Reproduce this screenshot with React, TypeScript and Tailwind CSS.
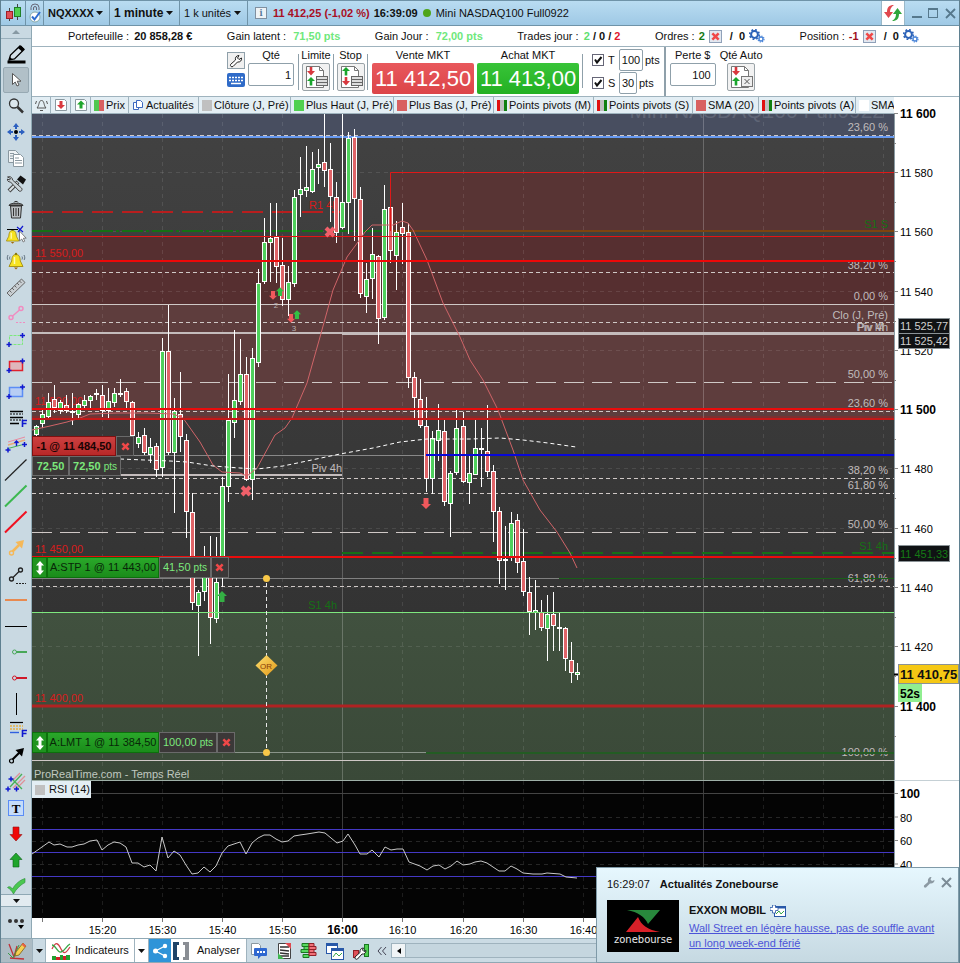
/**
 * Trading workspace: quotes header, order entry, price chart, RSI, news popup
 */

import { useState } from 'react';
import type { ReactNode } from 'react';

type Candle = [number, number, number, number, 'g' | 'r'];

// high, body top, body bottom, low, direction (one per minute from 15:09)
const CANDLES: Candle[] = [
  [425, 426, 435, 436, 'g'], [409, 414, 424, 428, 'g'], [393, 402, 417, 418, 'g'], [385, 399, 408, 413, 'r'],
  [400, 402, 411, 414, 'g'], [395, 405, 411, 413, 'r'], [393, 411, 413, 425, 'g'], [403, 404, 415, 418, 'g'],
  [395, 400, 406, 408, 'g'], [395, 396, 401, 408, 'g'], [389, 393, 395, 400, 'g'], [385, 395, 411, 417, 'r'],
  [388, 401, 411, 418, 'g'], [388, 393, 403, 407, 'g'], [379, 393, 395, 397, 'g'], [388, 391, 402, 409, 'r'],
  [401, 402, 436, 438, 'r'], [432, 437, 444, 448, 'g'], [428, 435, 453, 455, 'r'], [438, 447, 455, 463, 'g'],
  [443, 446, 470, 477, 'r'], [338, 351, 468, 477, 'g'], [305, 351, 453, 455, 'r'], [398, 411, 453, 513, 'g'],
  [372, 414, 437, 452, 'r'], [434, 440, 512, 538, 'r'], [493, 512, 603, 610, 'r'], [590, 592, 606, 656, 'g'],
  [546, 570, 592, 601, 'g'], [536, 562, 618, 644, 'r'], [537, 582, 619, 623, 'g'], [477, 486, 572, 587, 'g'],
  [374, 420, 487, 502, 'g'], [330, 400, 423, 438, 'g'], [339, 374, 402, 405, 'g'], [357, 374, 480, 481, 'r'],
  [348, 358, 480, 500, 'g'], [269, 283, 363, 367, 'g'], [218, 242, 282, 284, 'g'], [203, 238, 243, 282, 'g'],
  [203, 237, 267, 283, 'r'], [238, 265, 300, 306, 'r'], [266, 282, 300, 316, 'g'], [190, 197, 284, 287, 'g'],
  [157, 189, 195, 217, 'g'], [146, 187, 191, 197, 'g'], [152, 169, 192, 193, 'g'], [149, 164, 168, 184, 'g'],
  [114, 162, 171, 187, 'r'], [143, 169, 197, 222, 'r'], [182, 197, 233, 243, 'r'], [114, 202, 228, 229, 'g'],
  [132, 138, 203, 234, 'g'], [129, 137, 199, 241, 'r'], [187, 199, 294, 298, 'r'], [263, 279, 297, 313, 'g'],
  [228, 254, 279, 299, 'g'], [255, 256, 319, 344, 'r'], [185, 209, 318, 320, 'g'], [206, 207, 251, 263, 'r'],
  [221, 232, 256, 290, 'g'], [203, 227, 234, 264, 'r'], [223, 232, 378, 388, 'r'], [372, 377, 398, 418, 'r'],
  [379, 399, 426, 428, 'r'], [397, 426, 479, 492, 'r'], [431, 438, 479, 494, 'g'], [404, 430, 441, 461, 'g'],
  [420, 431, 502, 506, 'r'], [471, 473, 504, 537, 'g'], [410, 428, 473, 475, 'g'], [412, 426, 482, 483, 'r'],
  [456, 473, 483, 504, 'g'], [420, 448, 475, 475, 'g'], [428, 448, 450, 487, 'g'], [405, 451, 472, 477, 'r'],
  [465, 471, 512, 542, 'r'], [507, 511, 561, 584, 'r'], [526, 559, 561, 590, 'g'], [512, 523, 558, 561, 'g'],
  [514, 520, 563, 573, 'r'], [529, 561, 592, 596, 'r'], [577, 592, 612, 635, 'r'], [580, 610, 613, 630, 'g'],
  [600, 612, 628, 631, 'r'], [595, 614, 629, 661, 'g'], [592, 614, 626, 651, 'r'], [612, 627, 629, 651, 'r'],
  [627, 628, 659, 671, 'r'], [642, 660, 673, 683, 'r'], [663, 672, 675, 680, 'g'],
];

const candleX = (i: number) => 36 + i * 6 + (i > 70 ? 1 : 0);

const SMA20 =
  '32,430 50,426 67,422 80,418 90,414 117,413 147,413 173,414 183,418 200,442 213,465 222,472 240,473 247,476 257,468 275,435 285,428 292,418 307,383 320,337 333,290 347,257 358,242 365,232 372,225 393,225 402,221 408,223 413,230 427,260 443,303 460,337 470,360 483,380 498,410 513,450 523,480 540,510 557,532 570,553 577,568';
const SMA_LONG =
  '120,459 170,461 187,462 213,466 240,468 257,469 283,466 307,461 340,454 373,448 400,442 427,439 470,439 500,438 523,440 548,443 576,447';
const RSI_LINE =
  '32,854 42,847 49,842 54,845 60,844 67,847 72,847 78,845 84,844 90,841 97,840 102,850 108,845 114,842 120,843 126,847 132,863 138,863 144,867 150,865 156,871 162,837 168,858 174,851 180,855 186,865 192,874 198,873 204,867 210,872 216,866 222,853 228,846 234,844 240,842 246,854 252,843 258,838 264,835 270,835 276,839 282,842 288,841 294,836 300,835 307,834 319,832 325,833 337,843 343,841 348,834 355,845 360,854 367,854 372,850 379,857 385,847 391,850 397,849 403,849 409,862 420,866 427,870 433,866 439,865 445,869 451,866 457,861 463,865 470,864 475,862 481,861 487,863 493,867 499,871 505,871 511,866 517,869 523,873 533,874 542,874 547,873 560,874 566,877 577,878';

const TIMES = [42, 102, 162, 222, 282, 342, 402, 463, 523, 583, 643, 703, 763, 823, 883];
const PRICES = [172, 231, 291, 350, 409, 468, 528, 587, 646, 706];

const FIB = [
  { y: 135, text: '23,60 %', ty: 131, dash: '4 3' },
  { y: 272, text: '38,20 %', ty: 269, dash: '4 3' },
  { y: 304, text: '0,00 %', ty: 300, dash: '' },
  { y: 322, text: 'Clo (J, Pré)', ty: 319, dash: '4 3' },
  { y: 382, text: '50,00 %', ty: 378, dash: '20 8' },
  { y: 411, text: '23,60 %', ty: 407, dash: '4 3' },
  { y: 478, text: '38,20 %', ty: 474, dash: '4 3' },
  { y: 493, text: '61,80 %', ty: 489, dash: '4 3' },
  { y: 532, text: '50,00 %', ty: 528, dash: '20 8' },
  { y: 586, text: '61,80 %', ty: 582, dash: '4 3' },
  { y: 760, text: '100,00 %', ty: 756, dash: '' },
];

/* ---------- small icons ---------- */

function Cross({ size = 9 }: { size?: number }) {
  return (
    <svg width={size} height={size} viewBox="0 0 10 10">
      <path d="M1.5 1.5 8.5 8.5M8.5 1.5 1.5 8.5" stroke="#f04848" strokeWidth="2.8" />
    </svg>
  );
}

function Caret() {
  return (
    <svg width="7" height="4" viewBox="0 0 7 4">
      <path d="M0 0h7L3.5 4z" fill="#111" />
    </svg>
  );
}

function Gears() {
  return (
    <svg width="16" height="14" viewBox="0 0 16 14" fill="none">
      <circle cx="5.5" cy="5.5" r="3.4" stroke="#2c62b8" strokeWidth="2" />
      <circle cx="5.5" cy="5.5" r="4.8" stroke="#2c62b8" strokeWidth="1.6" strokeDasharray="1.8 1.97" />
      <circle cx="12" cy="10" r="2" stroke="#4c86d8" strokeWidth="1.4" />
      <circle cx="12" cy="10" r="3" stroke="#4c86d8" strokeWidth="1.2" strokeDasharray="1.2 1.15" />
    </svg>
  );
}

function DeleteBox() {
  return (
    <button aria-label="Supprimer" className="flex h-[13px] w-[13px] items-center justify-center border border-slate-400 bg-slate-200">
      <Cross />
    </button>
  );
}

function OrderIcon({ kind }: { kind: 'limit' | 'stop' | 'auto' }) {
  const down = 'M-1.3 0h2.6v4H4L0 8.5-4 4h2.7z';
  const up = 'M-1.3 8.5h2.6V4H4L0 0-4 4h2.7z';
  return (
    <svg width="24" height="24" viewBox="0 0 24 24">
      <path d="M2.5 1.5h13l4 4v17h-17z" fill="#fff" stroke="#777" />
      <path d="M15.5 1.5v4h4" fill="none" stroke="#777" />
      <path d={kind === 'stop' ? up : down} transform="translate(7 2)" fill={kind === 'stop' ? '#1aa52c' : '#d8383e'} />
      <path d={kind === 'stop' ? down : up} transform="translate(7 12)" fill={kind === 'stop' ? '#d8383e' : '#1aa52c'} />
      {kind === 'auto' ? (
        <g>
          <rect x="12.5" y="11.5" width="11" height="10" fill="#eee" stroke="#777" />
          <path d="M15.500 14l5 5M20.500 14l-5 5" stroke="#555" />
        </g>
      ) : (
        <g fill="#ddd" stroke="#666">
          <rect x="12.5" y="11.5" width="11" height="3" />
          <rect x="12.5" y="14.5" width="11" height="3" />
          <rect x="12.5" y="17.5" width="11" height="3" />
        </g>
      )}
    </svg>
  );
}

const plus = (x: number, y: number) => (
  <path d={`M${x - 2.5} ${y}h5M${x} ${y - 2.5}v5`} stroke="#1018d0" strokeWidth="1.5" />
);

/* ---------- left drawing tools ---------- */

const bell = (
  <g>
    <path d="M12 4.5c-3.500 0-4 3-4.300 6.500L5 16.500h14L16.300 11C16 7.500 15.500 4.500 12 4.500z" fill="#f7e321" stroke="#a8941a" />
    <path d="M10 17.500h4l-2 2z" fill="#a06a10" />
    <path d="M10.500 7v7" stroke="#fffbb0" strokeWidth="1.5" />
    <circle cx="12" cy="4" r="1.2" fill="#8a7a10" />
  </g>
);
const upArrow = 'M12 5l6 6.5h-3V19H9v-7.500H6z';
const downArrow = 'M12 19l6-6.500h-3V5H9v7.500H6z';

const TOOLS: { name: string; icon: ReactNode }[] = [
  {
    name: 'Dessiner',
    icon: (
      <g>
        <path d="M3.500 20h18" stroke="#000" strokeWidth="3" />
        <path d="M5 18l1.500-5L16 4l4 3.500L10.500 17z" fill="#d5e2ea" stroke="#000" strokeWidth="1.3" />
        <path d="M14 6l4 3.500 2.500-2.500L17 3.500z" fill="#000" />
        <path d="M5 18.500l1-3.500 2.500 2.500z" fill="#000" />
      </g>
    ),
  },
  { name: 'Curseur', icon: <path d="M8.500 5.500v11l2.700-2.500 1.800 4 2-1-1.800-3.800h3.800z" fill="#fff" stroke="#555" /> },
  {
    name: 'Loupe',
    icon: (
      <g fill="none" stroke="#333">
        <circle cx="10" cy="9.5" r="4.5" fill="#dbe6ec" strokeWidth="1.3" />
        <path d="M13.500 13l5.500 5.500" strokeWidth="2.5" />
      </g>
    ),
  },
  {
    name: 'Déplacer',
    icon: (
      <g fill="#2d60c0">
        <circle cx="12" cy="12" r="2" fill="#000" />
        <path d="M12 3l3 4h-2v2h-2V7H9zM12 21l3-4h-2v-2h-2v2H9zM3 12l4-3v2h2v2H7v2zM21 12l-4-3v2h-2v2h2v2z" />
      </g>
    ),
  },
  {
    name: 'Copier',
    icon: (
      <g fill="#fff" stroke="#8a98a0">
        <path d="M4.500 4.500h7l3 3v9h-10z" fill="#eef2f4" />
        <path d="M9.500 8.500h7l3 3v9h-10z" />
        <path d="M11 12h4M11 14.500h7M11 17h7M6 7.500h4M6 10h3M6 12.500h3" />
      </g>
    ),
  },
  {
    name: 'Outils',
    icon: (
      <g>
        <path d="M5 19l9-9" stroke="#444" strokeWidth="4" />
        <path d="M5.500 18.500l8-8" stroke="#dde4e8" strokeWidth="2" />
        <path d="M3.500 5c2-1 5 0 5 3l9 8c1.500 2-.5 4-2.500 3l-8.500-9c-2 0-3.500-1-3-3l2 1 1-1.500z" fill="#ccd5da" stroke="#444" />
        <path d="M13 7.500l3.500-4 5.500 4-3 5z" fill="#111" />
      </g>
    ),
  },
  {
    name: 'Corbeille',
    icon: (
      <g fill="#b9bdc0" stroke="#333">
        <path d="M6.500 8h11l-1 12h-9z" />
        <path d="M5 7.500c0-3 14-3 14 0z" fill="#777" />
        <path d="M10 4.500c0-1.500 4-1.500 4 0M9.500 10v8M12 10v8M14.500 10v8" />
      </g>
    ),
  },
  {
    name: 'Alerte sur ligne',
    icon: (
      <g>
        <g transform="translate(-2 2.500) scale(.88)">{bell}</g>
        <path d="M3 5.500h11" stroke="#000" />
        <path d="M13 3l6 5M19 2l-5 6" stroke="#1018d0" strokeWidth="1.2" />
        <path d="M15.500 7v10l2.300-2 1.400 3 1.500-.8-1.300-3h2.800z" fill="#fff" stroke="#666" strokeWidth=".8" />
      </g>
    ),
  },
  {
    name: 'Alerte',
    icon: (
      <g>
        {bell}
        <path d="M4 5c-1 2-1 4 0 5M6 6.500c-.5 1-.5 2 0 3M20 5c1 2 1 4 0 5M18 6.500c.5 1 .5 2 0 3" stroke="#456" fill="none" strokeWidth=".8" />
      </g>
    ),
  },
  {
    name: 'Règle',
    icon: (
      <g stroke="#666">
        <path d="M3 17L17.500 3l3.500 3.500L6.500 20.500z" fill="#c8ced2" />
        <path d="M5.500 14.500l2 2M8 12l2 2M10.500 9.500l2 2M13 7l2 2M15.500 5l2 2" />
      </g>
    ),
  },
  {
    name: 'Segment rose',
    icon: (
      <g fill="none" stroke="#f08cc0" strokeWidth="1.5">
        <path d="M8 14.500l7.500-6.500" />
        <circle cx="7" cy="15.5" r="2" />
        <circle cx="17" cy="6.5" r="2" />
        <path d="M12 20.500h9" strokeDasharray="2 1.5" strokeWidth="1" />
      </g>
    ),
  },
  {
    name: 'Rectangle vert',
    icon: (
      <g>
        <rect x="5.5" y="7.5" width="13" height="9" fill="none" stroke="#7ce87c" strokeDasharray="3 1" />
        {plus(5, 16.5)}
        {plus(18.5, 7.5)}
      </g>
    ),
  },
  {
    name: 'Rectangle rouge',
    icon: (
      <g>
        <rect x="5.5" y="7.5" width="13" height="9" fill="#dfb6bb" stroke="#e0202c" strokeWidth="1.5" />
        {plus(5, 16.5)}
        {plus(18.5, 7)}
      </g>
    ),
  },
  {
    name: 'Rectangle bleu',
    icon: (
      <g>
        <rect x="5.5" y="7.5" width="13" height="9" fill="#b7cdf4" stroke="#5b8df5" strokeWidth="1.5" />
        {plus(5, 16.5)}
        {plus(18.5, 7)}
      </g>
    ),
  },
  {
    name: 'Fibonacci',
    icon: (
      <g>
        <path d="M6 5.500h13M6 11.500h13M6 17.500h9" stroke="#000" strokeWidth="1.5" />
        <path d="M6 8h13M6 14h13" stroke="#000" strokeDasharray="2 1" />
        <path d="M18.500 21v-6.500h4.500M18.500 17.500h4" stroke="#1018d0" strokeWidth="1.6" fill="none" />
      </g>
    ),
  },
  {
    name: 'Canal',
    icon: (
      <g fill="none">
        <path d="M4 10l17-5" stroke="#e88aa0" />
        <path d="M4 13l17-5" stroke="#e8a878" strokeWidth="1.5" />
        <path d="M4 16.500l17-4.500" stroke="#48b058" />
        {plus(4, 18)}
        {plus(20.5, 12.5)}
        <path d="M12.500 14V9.500M10.500 11l2-2 2 2" stroke="#1018d0" strokeWidth="1.4" />
      </g>
    ),
  },
  { name: 'Ligne noire', icon: <path d="M1 22.500L22.500 1.500" stroke="#222" strokeWidth="1.2" /> },
  { name: 'Ligne verte', icon: <path d="M1 22.500L22.500 1.500" stroke="#3cb850" strokeWidth="2" /> },
  { name: 'Ligne rouge', icon: <path d="M1 22.500L22.500 1.500" stroke="#f01020" strokeWidth="2" /> },
  {
    name: 'Flèche orange',
    icon: (
      <g>
        <path d="M8.500 15.500L15 9" stroke="#f5b858" strokeWidth="2.5" />
        <path d="M11.500 6l8.500-2-2 8.500z" fill="#f5b858" />
        <circle cx="7.5" cy="17" r="2" fill="none" stroke="#f5b858" strokeWidth="1.4" />
      </g>
    ),
  },
  {
    name: 'Segment',
    icon: (
      <g fill="none" stroke="#222" strokeWidth="1.3">
        <path d="M9 15.500l6-6" />
        <circle cx="7.5" cy="17" r="2" />
        <circle cx="16.5" cy="8" r="2" />
        <path d="M12 21.500h10" strokeDasharray="2 1" strokeWidth="1" />
      </g>
    ),
  },
  { name: 'Horizontale orange', icon: <path d="M1 12h22" stroke="#e88a50" strokeWidth="2" /> },
  { name: 'Horizontale', icon: <path d="M1 12.500h22" stroke="#000" /> },
  {
    name: 'Rayon vert',
    icon: (
      <g stroke="#48a858" fill="none">
        <path d="M12 12h11" strokeWidth="2" />
        <circle cx="10.5" cy="12" r="2" />
      </g>
    ),
  },
  {
    name: 'Rayon rouge',
    icon: (
      <g stroke="#d01828" fill="none">
        <path d="M12 12h11" strokeWidth="2" />
        <circle cx="10.5" cy="12" r="2" />
      </g>
    ),
  },
  { name: 'Verticale', icon: <path d="M12.500 1v22" stroke="#000" /> },
  {
    name: 'Fibonacci temps',
    icon: (
      <g fill="none">
        <path d="M6 4.500h13" stroke="#000" strokeWidth="1.2" />
        <path d="M6 8h13M6 11h13" stroke="#e8b040" strokeDasharray="2 1" strokeWidth="1.5" />
        <path d="M6 14.500h9" stroke="#3060e0" strokeWidth="1.4" />
        <path d="M18.500 19v-6.500h4.500M18.500 15.500h4" stroke="#1018d0" strokeWidth="1.6" />
      </g>
    ),
  },
  {
    name: 'Flèche noire',
    icon: (
      <g>
        <path d="M8.500 15.500l7-7" stroke="#000" strokeWidth="2.2" />
        <path d="M11.500 6l8.500-2-2 8.500z" />
        <circle cx="7.5" cy="17" r="2" fill="none" stroke="#000" strokeWidth="1.2" />
      </g>
    ),
  },
  {
    name: 'Fourchette',
    icon: (
      <g fill="none">
        <path d="M9 10l7-7M9 18L21 6M12 19l9-9" stroke="#e09098" strokeWidth="1.3" />
        <path d="M8 9l10 10M6 17L18 4" stroke="#48b058" strokeWidth="1.3" />
        {plus(7, 9)}
        {plus(4, 19)}
        {plus(12.5, 19)}
      </g>
    ),
  },
  {
    name: 'Texte',
    icon: (
      <g>
        <rect x="4.5" y="4.5" width="15" height="15" fill="#c5dcfa" stroke="#5b8df5" />
        <text x="12" y="16.5" textAnchor="middle" fontFamily="Liberation Serif, serif" fontWeight="700" fontSize="13">T</text>
      </g>
    ),
  },
  { name: 'Flèche vente', icon: <path d={downArrow} fill="#f00808" stroke="#901010" strokeWidth=".6" /> },
  { name: 'Flèche achat', icon: <path d={upArrow} fill="#1fa52c" stroke="#0c6018" strokeWidth=".6" /> },
  { name: 'Valider', icon: <path d="M3.500 13.500c2-2 4 0 5 1.500C11 10 16 6 21 4.500v4C17 10.500 12 15 9.500 20c-1.500-3-3.500-5-6-6.500z" fill="#4ac850" stroke="#2a8a38" strokeWidth=".6" /> },
];

function Toolbar() {
  const [active, setActive] = useState('Curseur');
  return (
    <nav className="flex w-[31px] shrink-0 flex-col border-r border-[#8fa8b4] bg-[#c9d9e2]">
      <button aria-label="Monter" className="flex h-[13px] items-center justify-center border-b border-[#9ab0bc]">
        <svg width="8" height="4" viewBox="0 0 8 4">
          <path d="M4 0l4 4H0z" fill="#8799a3" />
        </svg>
      </button>
      <div className="flex h-[855px] flex-col overflow-hidden pt-0.5">
        {TOOLS.map((t) => (
          <button
            key={t.name}
            title={t.name}
            onClick={() => setActive(t.name)}
            className={
              active === t.name
                ? 'mx-0.5 flex h-[26px] shrink-0 items-center justify-center rounded-xs border border-[#97a9b3] bg-[#b1c0c8]'
                : 'mx-0.5 flex h-[26px] shrink-0 items-center justify-center'
            }
          >
            <svg width="24" height="24" viewBox="0 0 24 24" className="shrink-0">
              {t.icon}
            </svg>
          </button>
        ))}
      </div>
      <button aria-label="Descendre" className="flex h-[13px] items-center justify-center border-y border-[#8fa8b4] bg-[#e2ebf0]">
        <Caret />
      </button>
      <button aria-label="Plus d'outils" className="flex h-[31px] items-center justify-center">
        <svg width="20" height="14" viewBox="0 0 20 14">
          <path d="M12 9h6l-3 4z" />
          <g fill="#333">
            <circle cx="4" cy="5" r="2" />
            <circle cx="10" cy="5" r="2" />
            <circle cx="16" cy="5" r="2" />
          </g>
        </svg>
      </button>
    </nav>
  );
}

/* ---------- header ---------- */

function HeaderSelect({ label, options, className }: { label: string; options: string[]; className: string }) {
  return (
    <div className={`relative flex items-center border-r border-[#6f93a8] ${className}`}>
      <select aria-label={label} className="h-full w-full appearance-none bg-transparent pl-1 outline-none">
        {options.map((o) => (
          <option key={o}>{o}</option>
        ))}
      </select>
      <span className="pointer-events-none absolute right-1.5">
        <Caret />
      </span>
    </div>
  );
}

function TitleBar() {
  return (
    <header className="flex h-[26px] items-stretch border-y border-[#6f93a8] bg-gradient-to-b from-[#b9dcf1] to-[#9fc9e5] text-[11px]">
      <div className="flex w-[25px] shrink-0 items-center justify-center border-r border-[#6f93a8]">
        <svg width="17" height="18" viewBox="0 0 17 18">
          <path d="M4.500 4v13M12.500 0v16" stroke="#444" />
          <rect x="1.5" y="7.5" width="6" height="7" fill="#e05058" stroke="#a02028" />
          <rect x="9.5" y="3.5" width="6" height="9" fill="#50d050" stroke="#208028" />
        </svg>
      </div>
      <div className="flex w-[18px] shrink-0 items-center justify-center border-r border-[#6f93a8]">
        <svg width="12" height="20" viewBox="0 0 12 20" fill="none">
          <path d="M2 7V4.500a4 3.500 0 0 1 8 0V7M4.500 7V5a1.500 1.500 0 0 1 3 0v2" stroke="#667" />
          <circle cx="6" cy="14" r="5" fill="#fff" stroke="#8aa" />
          <path d="M3 13.500l2.500 3L11 9" stroke="#2d6cd0" strokeWidth="2" />
        </svg>
      </div>
      <HeaderSelect label="Valeur" options={['NQXXXX', 'DAXXXX']} className="w-[66px] font-bold" />
      <HeaderSelect label="Unité de temps" options={['1 minute', '5 minutes']} className="w-[70px] text-xs font-bold" />
      <HeaderSelect label="Historique" options={['1 k unités', '2 k unités']} className="w-[68px]" />
      <div className="flex flex-1 items-center gap-1 pl-[7px] whitespace-nowrap">
        <span className="mr-0.5 flex h-3 w-3 items-center justify-center border border-[#8090a0] bg-[#eef3f6] font-serif text-[10px] font-bold text-[#56789a]">i</span>
        <b className="text-[#a80f24]">11 412,25 (-1,02 %)</b>
        <b>16:39:09</b>
        <span className="mx-px h-2 w-2 rounded-full bg-[#4fa51a]" />
        <span>Mini NASDAQ100 Full0922</span>
      </div>
      <button aria-label="Synchroniser" className="flex w-6 items-center justify-center border-x border-[#9ab8c8] bg-white">
        <svg width="20" height="18" viewBox="0 0 20 18">
          <path d="M11 1C6 1 4 3.500 4 8H1l4.500 6L10 8H7c0-3 1-5 4-7z" fill="#e0484e" />
          <path d="M9 17c5 0 7-2.500 7-7h3l-4.500-6L10 10h3c0 3-1 5-4 7z" fill="#2fa63c" />
        </svg>
      </button>
      <div className="flex w-[54px] items-center justify-around pl-1 text-[#56788c]">
        <button aria-label="Réduire" className="h-2.5 w-2.5 border-b-2 border-[#56788c]" />
        <button aria-label="Agrandir" className="h-2.5 w-2.5 border border-t-2 border-[#56788c]" />
        <button aria-label="Fermer">
          <svg width="11" height="11" viewBox="0 0 11 11">
            <path d="M1 1l9 9M10 1l-9 9" stroke="#56788c" strokeWidth="1.8" />
          </svg>
        </button>
      </div>
    </header>
  );
}

function AccountBar() {
  return (
    <div className="flex h-[21px] items-center justify-between border-b border-[#9fb3be] pr-10 pl-9 text-[11px] whitespace-nowrap">
      <div>Portefeuille : <b className="ml-0.5">20 858,28 €</b></div>
      <div>Gain latent : <b className="ml-1 text-[#6fe87c]">71,50 pts</b></div>
      <div>Gain Jour : <b className="ml-1 text-[#6fe87c]">72,00 pts</b></div>
      <div>
        Trades jour : <b className="ml-0.5"><span className="text-[#5fe070]">2</span> / 0 / <span className="text-[#e01830]">2</span></b>
      </div>
      <div className="flex items-center gap-1">
        Ordres : <b className="text-[#157a15]">2</b>
        <DeleteBox />
        <b className="ml-1">/&nbsp; 0</b>
        <Gears />
      </div>
      <div className="flex items-center gap-1">
        Position : <b className="text-[#a01020]">-1</b>
        <DeleteBox />
        <b className="ml-1">/&nbsp; 0</b>
        <Gears />
      </div>
    </div>
  );
}

const iconButton = 'flex h-[28px] w-[28px] items-center justify-center rounded-xs border border-[#9aa3a8] bg-[#f2f2f2]';
const field = 'rounded-xs border border-[#8fa0aa] bg-white text-[11px]';

function OrderEntry() {
  const [qty, setQty] = useState('1');
  return (
    <div className="flex h-[50px] items-start border-b border-[#9fb3be] pl-[195px] text-[11px] leading-[15px] whitespace-nowrap">
      <div className="flex flex-col gap-1 pt-[5px]">
        <button aria-label="Réglages" className="flex h-[17px] w-[18px] items-center justify-center border border-[#8fa0aa] bg-[#f0f0f0]">
          <svg width="14" height="14" viewBox="0 0 14 14">
            <path d="M1.500 10.500l5-4.500c-.7-2.500 1-4.500 3.500-4.500L8.500 4l1.500 1.500L12.500 4c.5 2.500-1.500 4.500-4 4l-4.500 4.500c-1.500 1-3-.5-2.500-2z" fill="#fff" stroke="#222" />
          </svg>
        </button>
        <button aria-label="Clavier" className="flex h-[14px] w-[18px] items-center justify-center rounded-xs bg-[#2f6bc8]">
          <svg width="14" height="9" viewBox="0 0 14 9" stroke="#fff" strokeWidth="1.5">
            <path d="M0 1.500h14M0 4.500h14" strokeDasharray="2 1" />
            <path d="M2 7.500h10" />
          </svg>
        </button>
      </div>
      <label className="ml-[3px] flex w-[46px] flex-col items-center pt-px">
        Qté
        <input value={qty} onChange={(e) => setQty(e.target.value)} className={`${field} h-[23px] w-full pr-0.5 text-right`} />
      </label>
      <div className="mt-[7px] ml-1 flex h-[36px] w-[35px] items-start justify-center border-l border-[#8fa0aa]">
        <label className="-mt-[7px] flex flex-col items-center pt-px">
          Limite
          <button aria-label="Limite" className={iconButton}><OrderIcon kind="limit" /></button>
        </label>
      </div>
      <div className="mt-[7px] flex h-[36px] w-[35px] items-start justify-center border-x border-[#8fa0aa]">
        <label className="-mt-[7px] flex flex-col items-center pt-px">
          Stop
          <button aria-label="Stop" className={iconButton}><OrderIcon kind="stop" /></button>
        </label>
      </div>
      <div className="ml-1 flex flex-col items-center pt-px">
        Vente MKT
        <button className="h-[31px] w-[102px] rounded-xs bg-gradient-to-b from-[#e8585c] to-[#dc4448] text-[22px] leading-[31px] text-white">11 412,50</button>
      </div>
      <div className="ml-[3px] flex flex-col items-center pt-px">
        Achat MKT
        <button className="h-[31px] w-[102px] rounded-xs bg-gradient-to-b from-[#38c438] to-[#22b022] text-[22px] leading-[31px] text-white">11 413,00</button>
      </div>
      <div className="mt-[7px] ml-[3px] h-[34px] border-l border-[#8fa0aa]" />
      <div className="flex flex-col gap-px pt-0.5 pl-[9px]">
        <div className="flex h-[22px] items-center">
          <label className="flex w-[27px] items-center gap-1"><CheckBox />T</label>
          <input aria-label="T points" defaultValue="100" className={`${field} h-[22px] w-6 text-center`} />
          <span className="ml-0.5">pts</span>
        </div>
        <div className="flex h-[22px] items-center">
          <label className="flex w-[27px] items-center gap-1"><CheckBox />S</label>
          <input aria-label="S points" defaultValue="30" className={`${field} h-[22px] w-[18px] text-center`} />
          <span className="ml-0.5">pts</span>
        </div>
      </div>
      <div className="ml-1 h-full border-l-2 border-[#8fa0aa]" />
      <label className="ml-1 flex w-[46px] flex-col items-center pt-px">
        Perte $
        <input defaultValue="100" className={`${field} h-[23px] w-full pr-1 text-right`} />
      </label>
      <label className="ml-1 flex flex-col items-center pt-px">
        Qté Auto
        <button aria-label="Qté Auto" className={iconButton}><OrderIcon kind="auto" /></button>
      </label>
    </div>
  );
}

function CheckBox() {
  return (
    <span className="relative flex h-3 w-3">
      <input type="checkbox" defaultChecked className="peer h-3 w-3 appearance-none border border-[#667] bg-white" />
      <svg width="12" height="12" viewBox="0 0 12 12" className="pointer-events-none invisible absolute inset-0 peer-checked:visible">
        <path d="M3 5.500l2 3L9.500 3" fill="none" stroke="#111" strokeWidth="2" />
      </svg>
    </span>
  );
}

/* ---------- chart ---------- */

const TABS = [
  { text: 'Prix', w: 'w-[38px]', colors: ['#50c850', '#d86060'] },
  { text: 'Actualités', w: 'w-[70px]', colors: [] },
  { text: 'Clôture (J, Pré)', w: 'w-[92px]', colors: ['#c0c0c0', '#c0c0c0'] },
  { text: 'Plus Haut (J, Pré)', w: 'w-[103px]', colors: ['#50d050', '#50d050'] },
  { text: 'Plus Bas (J, Pré)', w: 'w-[100px]', colors: ['#d86060', '#d86060'] },
  { text: 'Points pivots (M)', w: 'w-[100px]', colors: ['#e01010', '#c0c0c0', '#108010'] },
  { text: 'Points pivots (S)', w: 'w-[99px]', colors: ['#e01010', '#c0c0c0', '#108010'] },
  { text: 'SMA (20)', w: 'w-[66px]', colors: ['#d86060', '#d86060'] },
  { text: 'Points pivots (A)', w: 'w-[97px]', colors: ['#e01010', '#c0c0c0', '#108010'] },
  { text: 'SMA', w: 'w-[66px]', colors: ['#ffffff', '#ffffff'] },
];

function IndicatorTabs() {
  return (
    <div className="flex h-[17px] overflow-hidden border-b border-[#9fb3be] bg-[#e3eef4] text-[11px] whitespace-nowrap">
      <button aria-label="Alertes" className="flex w-[19px] shrink-0 items-center justify-center border-r border-[#9fb3be]">
        <svg width="13" height="13" viewBox="0 0 13 13" fill="none" stroke="#555">
          <path d="M6.500 1.500c-3 0-2 5-4.500 7.500h9C8.500 6.500 9.500 1.500 6.500 1.500zM5 11.500h3M1.500 2L.5 5M11.500 2l1 3" />
        </svg>
      </button>
      {[0, 1].map((i) => (
        <button key={i} aria-label={i ? 'Achats' : 'Ventes'} className="flex w-5 shrink-0 items-center justify-center border-r border-[#9fb3be]">
          <svg width="14" height="14" viewBox="0 0 14 14">
            <path d="M1.500 1.500h9l2 2v9h-11z" fill="#fff" stroke="#8a98a0" />
            {i ? <path d="M7 2.500l4 4H8.500v4h-3v-4H3z" fill="#1fa52c" /> : <path d="M7 11l4-4H8.500V3h-3v4H3z" fill="#d8383e" />}
          </svg>
        </button>
      ))}
      {TABS.map((t) => (
        <button key={t.text} className={`flex shrink-0 items-center gap-0.5 border-r border-[#9fb3be] pl-[3px] ${t.w}`}>
          {t.colors.length ? (
            <span className="flex h-[11px] w-2.5">
              {t.colors.map((c, i) => (
                <span key={i} className="flex-1" style={{ background: c }} />
              ))}
            </span>
          ) : (
            <svg width="12" height="12" viewBox="0 0 12 12" fill="#fff" stroke="#3a68c0">
              <path d="M1.500 3.500h5v7h-5z" />
              <path d="M4.500 1.500h4l2 2v5h-6z" />
            </svg>
          )}
          <span>{t.text}</span>
        </button>
      ))}
    </div>
  );
}

function HLine({ y, x1 = 32, x2 = 894, c, w = 1, dash }: { y: number; x1?: number; x2?: number; c: string; w?: number; dash?: string }) {
  return <path d={`M${x1} ${y}H${x2}`} stroke={c} strokeWidth={w} strokeDasharray={dash || undefined} />;
}

function Grid({ top, bottom }: { top: number; bottom: number }) {
  return (
    <g stroke="#fff">
      {TIMES.map((x) => {
        const hour = x === 342 || x === 703;
        return <path key={x} d={`M${x + 0.5} ${top}V${bottom}`} strokeOpacity={hour ? 0.22 : 0.1} strokeDasharray={hour ? undefined : '4 4'} />;
      })}
    </g>
  );
}

const chartText = { fontFamily: '"Liberation Sans", sans-serif', fontSize: 11 };
const MARK_UP = 'M0-6l5 5H2.500v6h-5v-6H-5z';
const MARK_DOWN = 'M0 6l5-5H2.500v-6h-5v6H-5z';
const MARK_X = 'M-4-4L4 4M4-4L-4 4';

function PriceChart() {
  return (
    <svg className="block h-full w-full" viewBox="32 114 862 667" preserveAspectRatio="xMinYMin slice" style={chartText}>
      <defs>
        <linearGradient id="bg" x1="0" y1="0" x2="0" y2="1">
          <stop offset="0" stopColor="#424242" />
          <stop offset="1" stopColor="#2e2e2e" />
        </linearGradient>
        <linearGradient id="green" x1="0" y1="0" x2="0" y2="1">
          <stop offset="0" stopColor="#41513f" />
          <stop offset="1" stopColor="#3a4938" />
        </linearGradient>
        <linearGradient id="gold" x1="0" y1="0" x2="1" y2="1">
          <stop offset="0" stopColor="#ffe070" />
          <stop offset="1" stopColor="#e09818" />
        </linearGradient>
      </defs>
      <rect x="32" y="114" width="862" height="667" fill="url(#bg)" />
      <rect x="32" y="114" width="862" height="22" fill="#484e60" />
      <rect x="391" y="173" width="503" height="58" fill="#583434" />
      <rect x="32" y="237" width="862" height="67" fill="#562f30" />
      <rect x="32" y="304" width="862" height="115" fill="#5e3d3d" />
      <rect x="32" y="416" width="862" height="3" fill="#7c3030" />
      <rect x="32" y="612" width="862" height="169" fill="url(#green)" />
      <Grid top={114} bottom={781} />
      {PRICES.map((y) => (
        <HLine key={y} y={y + 0.5} c="rgba(255,255,255,0.1)" dash="4 4" />
      ))}
      <text x="884" y="118" textAnchor="end" fontSize="21" fill="#5f6576">Mini NASDAQ100 Full0922</text>

      {/* reference levels */}
      <HLine y={212} x2={342} c="#b81e1e" w={2} dash="21 9" />
      <HLine y={231} x2={391} c="#157015" w={2} dash="21 3 3 3" />
      <HLine y={231} x1={391} c="#7c4410" w={2} />
      <HLine y={455.5} x2={426} c="#888" />
      <HLine y={475} x2={342} c="#c4bcbc" w={2} />
      <HLine y={333} x2={342} c="#c4bcbc" w={2} />
      <HLine y={333.5} x1={342} c="#c4bcbc" w={3} />
      <HLine y={553} x1={342} c="#157015" w={2} dash="21 9" />
      {FIB.map((f) => (
        <HLine key={f.y} y={f.y + 0.5} c="#cfc8c6" dash={f.dash} />
      ))}
      <HLine y={137} c="#6698f0" w={2} />

      {/* right-hand captions */}
      <g fill="#c0bcbc" textAnchor="end">
        {FIB.map((f) => (
          <text key={f.y} x="888" y={f.ty}>{f.text}</text>
        ))}
        <text x="888" y="331">Piv 4h</text>
        <text x="884" y="331">Piv M</text>
        <text x="342" y="472">Piv 4h</text>
      </g>
      <g fill="#157015" textAnchor="end">
        <text x="888" y="228">S1 S</text>
        <text x="888" y="550">S1 4h</text>
        <text x="337" y="609">S1 4h</text>
      </g>
      <text x="34" y="778" fill="#c0c8c0">ProRealTime.com - Temps Réel</text>
      <g fill="#d81c1c">
        <text x="309" y="209">R1 4h</text>
        <text x="35" y="257">11 550,00</text>
        <text x="35" y="405">11 500,00</text>
        <text x="35" y="553">11 450,00</text>
        <text x="35" y="702">11 400,00</text>
      </g>
      <HLine y={578.5} x2={559} c="#808080" />
      <HLine y={578.5} x1={559} c="#186018" />
      <HLine y={752.5} x2={426} c="#8a948a" />
      <HLine y={753} x1={426} c="#235c23" w={2} />

      {CANDLES.map(([high, top, bottom, low, dir], i) => {
        const x = candleX(i);
        return (
          <g key={i}>
            <rect x={x} y={high} width="1" height={low - high} fill="#fff" />
            <rect x={x - 2} y={top} width="5" height={bottom - top} fill="#fff" />
            {bottom - top > 2 && (
              <rect x={x - 1} y={top + 1} width="3" height={bottom - top - 2} fill={dir === 'g' ? '#4fd05c' : '#e06468'} />
            )}
          </g>
        );
      })}
      <polyline points={SMA20} fill="none" stroke="#cf6468" />
      <polyline points={SMA_LONG} fill="none" stroke="#fff" strokeDasharray="4 3" />

      {/* levels drawn over the candles */}
      <path d="M390.500 231V172.500H894" fill="none" stroke="#e01818" />
      <HLine y={236.5} c="#e41414" />
      <HLine y={261} c="#ee0808" w={2} />
      <HLine y={409} c="#ea0c0c" w={2} />
      <HLine y={419} c="#c41818" w={2} />
      <HLine y={455} x1={426} c="#0808d8" w={2} />
      <HLine y={557} c="#ea0c0c" w={2} />
      <HLine y={612.5} c="#7ee87e" />
      <HLine y={706} c="#b02222" w={3} />
      <HLine y={780.5} c="#9fb0a8" />

      {/* executions */}
      <path d={MARK_UP} transform="translate(222 597)" fill="#34b044" />
      <path d={MARK_DOWN} transform="translate(426 503)" fill="#f0585c" />
      <path d={MARK_X} transform="translate(246 491)" stroke="#f0606a" strokeWidth="4" />
      <path d={MARK_X} transform="translate(330 232)" stroke="#f0606a" strokeWidth="4" />
      <path d={MARK_DOWN} transform="translate(273 295) scale(.8)" fill="#f0585c" />
      <path d={MARK_UP} transform="translate(280 292) scale(.8)" fill="#34c044" />
      <path d={MARK_DOWN} transform="translate(291 318) scale(.8)" fill="#f0585c" />
      <path d={MARK_UP} transform="translate(297 315) scale(.8)" fill="#34c044" />
      <g fill="#b8b0b0" fontSize="8" textAnchor="middle">
        <text x="276" y="308">2</text>
        <text x="294" y="331">3</text>
      </g>

      {/* OCO link between stop and limit */}
      <path d="M266.500 583V749" stroke="#e8e8e8" strokeDasharray="4 3" />
      <circle cx="266.5" cy="578.5" r="3.5" fill="#f8c848" />
      <circle cx="266.5" cy="752.5" r="3.5" fill="#f8c848" />
      <path d="M266.500 655l11 10.500-11 10.500-11-10.500z" fill="url(#gold)" />
      <text x="266" y="669" textAnchor="middle" fontSize="8" fill="#8a3c08">OR</text>
    </svg>
  );
}

const greyCell = 'flex items-center justify-center border border-[#6a6a6a] bg-[#3b3838]';

function CancelCell({ label }: { label: string }) {
  return (
    <button aria-label={label} className={`${greyCell} w-[18px]`}>
      <Cross />
    </button>
  );
}

function WorkingOrder({ kind, price, gain, className }: { kind: string; price: string; gain: string; className: string }) {
  return (
    <div className={`absolute left-0 flex h-[21px] text-[11px] whitespace-nowrap ${className}`}>
      <button aria-label={`Déplacer ${kind}`} className="flex w-[15px] items-center justify-center border border-[#0c700c] bg-[#1f941f]">
        <svg width="8" height="14" viewBox="0 0 8 14">
          <path d="M4 0l4 4.500H5.500v5H8L4 14 0 9.500h2.500v-5H0z" fill="#fff" />
        </svg>
      </button>
      <button className="w-[112px] border border-[#0c700c] bg-gradient-to-b from-[#2aa82a] to-[#1a8c1a] text-[#082808]">
        A:{kind} 1 @ {price}
      </button>
      <div className={`${greyCell} px-[3px] text-[#7ce87c]`}>
        {gain}&nbsp;<span className="text-[10px]">pts</span>
      </div>
      <CancelCell label={`Annuler ${kind}`} />
    </div>
  );
}

function OrderOverlay() {
  return (
    <>
      <div className="absolute top-[322px] left-0 text-[11px] font-bold">
        <div className="flex h-5">
          <button className="w-[84px] border border-[#801010] bg-gradient-to-b from-[#cc4040] to-[#b82828] text-[#180404]">-1 @ 11 484,50</button>
          <CancelCell label="Clôturer" />
        </div>
        <div className="flex h-5 text-[#7ce87c]">
          <div className={`${greyCell} w-[37px]`}>72,50</div>
          <div className={`${greyCell} w-[52px]`}>
            72,50&nbsp;<span className="text-[10px] font-normal">pts</span>
          </div>
        </div>
      </div>
      <WorkingOrder kind="STP" price="11 443,00" gain="41,50" className="top-[443px]" />
      <WorkingOrder kind="LMT" price="11 384,50" gain="100,00" className="top-[618px]" />
    </>
  );
}

function RsiChart() {
  return (
    <svg className="block h-full w-full" viewBox="32 781 862 137" preserveAspectRatio="xMinYMin slice">
      <rect x="32" y="781" width="862" height="137" fill="#040404" />
      <Grid top={781} bottom={918} />
      <HLine y={793.5} c="#444" />
      {[817, 841, 864, 888].map((y) => (
        <HLine key={y} y={y + 0.5} c="#262626" dash="4 4" />
      ))}
      {[829, 852, 876].map((y) => (
        <HLine key={y} y={y + 0.5} c="#4438c4" />
      ))}
      <polyline points={RSI_LINE} fill="none" stroke="#c8c8c8" />
    </svg>
  );
}

function TimeAxis() {
  const labels = ['', '15:20', '15:30', '15:40', '15:50', '16:00', '16:10', '16:20', '16:30', '16:40', '16:50', '17:00', '17:10', '17:20', ''];
  return (
    <svg className="block h-[20px] w-full" viewBox="32 918 862 20" preserveAspectRatio="xMinYMin slice" style={chartText}>
      {TIMES.map((x, i) => (
        <g key={x}>
          <path d={`M${x + 0.5} 918v4`} stroke="#777" />
          <text x={x + 0.5} y="934" textAnchor="middle" fontSize={x === 342 ? 12 : 11} fontWeight={x === 342 ? 700 : 400}>
            {labels[i]}
          </text>
        </g>
      ))}
    </svg>
  );
}

function PriceTag({ y, h, w, fill, color, text, bold }: { y: number; h: number; w: number; fill: string; color: string; text: string; bold?: boolean }) {
  return (
    <g>
      <rect x="898.5" y={y + 0.5} width={w} height={h} fill={fill} stroke="#8a9296" />
      <text x="900" y={y + h - (bold ? 4 : 3)} fill={color} fontSize={bold ? 13 : 11} fontWeight={bold ? 700 : 400}>{text}</text>
    </g>
  );
}

function PriceAxis() {
  return (
    <svg className="block h-[841px] w-[65px] shrink-0" viewBox="894 97 65 841" style={chartText}>
      <path d="M894.500 114V918" stroke="#8a9aa2" />
      <path d="M894 780.500h65" stroke="#c5d0d5" />
      {[113, ...PRICES].map((y, i) => (
        <g key={y}>
          <path d={`M894 ${y + 0.5}h4M894 ${y + 30.5}h2`} stroke="#888" />
          <text x="900" y={y + 5} fontSize={i % 5 === 0 ? 12 : 11} fontWeight={i % 5 === 0 ? 700 : 400}>
            {`11 ${600 - i * 20}`}
          </text>
        </g>
      ))}
      {[100, 80, 60, 40].map((v, i) => (
        <g key={v}>
          <path d={`M894 ${793.5 + i * 23.5}h4`} stroke="#888" />
          <text x="900" y={798 + i * 23.5} fontSize={i ? 11 : 12} fontWeight={i ? 400 : 700}>{v}</text>
        </g>
      ))}
      <PriceTag y={318} h={15} w={51} fill="#101214" color="#d0d0d0" text="11 525,77" />
      <PriceTag y={333} h={15} w={51} fill="#101214" color="#d0d0d0" text="11 525,42" />
      <PriceTag y={545} h={16} w={51} fill="#101214" color="#157a15" text="11 451,33" />
      <PriceTag y={664} h={19} w={60} fill="#f5c814" color="#111" text="11 410,75" bold />
      <rect x="898" y="684" width="24" height="18" fill="#90ee90" />
      <text x="900" y="698" fontSize="12" fontWeight="700">52s</text>
      <path d="M894 674.500h4" stroke="#000" strokeWidth="2" />
    </svg>
  );
}

/* ---------- bottom bar and news ---------- */

function BottomBar() {
  return (
    <footer className="flex h-[25px] items-stretch border-t border-b border-[#8fa8b4] bg-[#cbdbe4] text-[11px]">
      <button aria-label="Dessin" className="flex w-[31px] items-center justify-center bg-[#adbcc4]">
        <svg width="20" height="20" viewBox="0 0 20 20">
          <path d="M2 3l5 13L10 5M3 17l14 1" fill="none" stroke="#c03038" strokeWidth="1.3" />
          <path d="M1 12l5 5 6-13" fill="none" stroke="#3a9a48" />
          <path d="M8 15l1-4 7-9 3 3-7 9z" fill="#f5d050" stroke="#806010" strokeWidth=".8" />
          <path d="M14.500 3.500L16 2l3 2.500-1.500 2z" fill="#e86048" />
        </svg>
      </button>
      <button aria-label="Options dessin" className="flex w-[14px] items-center justify-center border-x border-[#9fb3be]"><Caret /></button>
      <button className="flex w-[88px] items-center gap-1 bg-white pl-[5px]">
        <svg width="20" height="20" viewBox="0 0 20 20" fill="none">
          <path d="M1 8c4-8 6-6 9 0s5 4 9-2" stroke="#d04048" strokeWidth="1.3" />
          <path d="M1 4c4 0 5 8 9 7s5-6 9-8" stroke="#38a848" strokeWidth="1.3" />
          <path d="M1 19v-4h4v4zM9 19v-5h3v5z" fill="#20a030" />
          <path d="M5 19v-3h4v3zM12 19v-4h3v4z" fill="#d02028" />
          <path d="M15 19v-5h4v5z" fill="#20a030" />
        </svg>
        Indicateurs
      </button>
      <button aria-label="Options indicateurs" className="flex w-[15px] items-center justify-center border-x border-[#9fb3be] bg-white"><Caret /></button>
      <button aria-label="Partager" className="flex w-[22px] items-center justify-center bg-[#2f94d8]">
        <svg width="16" height="16" viewBox="0 0 16 16" fill="#fff">
          <path d="M3.500 8L13 3M3.500 8l9.500 5" stroke="#fff" strokeWidth="1.3" />
          <circle cx="3.5" cy="8" r="2.5" />
          <circle cx="13" cy="3" r="2.2" />
          <circle cx="13" cy="13" r="2.2" />
        </svg>
      </button>
      <button className="flex w-[76px] items-center gap-1.5 border-r border-[#9fb3be] bg-white">
        <svg width="20" height="20" viewBox="0 0 20 20">
          <path d="M2 1h6v3H6v12h2v3H2z" fill="#1f4468" />
          <path d="M12 1h6v18h-6v-3h2V4h-2z" fill="#8a8e94" />
        </svg>
        Analyser
      </button>
      <div className="flex items-center gap-[7px] pl-[3px]">
        <button aria-label="Messages">
          <svg width="18" height="18" viewBox="0 0 18 18">
            <path d="M1.500 1.500h7l2 2v9h-9z" fill="#fff" stroke="#8a98a0" />
            <path d="M5 6h11q1 0 1 1v6q0 1-1 1h-5l-3 3v-3H5q-1 0-1-1V7q0-1 1-1z" fill="#2f68d0" />
            <path d="M7 10h2M10 10h2M13 10h2" stroke="#fff" strokeWidth="1.8" />
          </svg>
        </button>
        <button aria-label="Rapport">
          <svg width="18" height="18" viewBox="0 0 18 18">
            <path d="M3.500 1.500h12v15h-12z" fill="#fff" stroke="#444" />
            <path d="M5 5h9M5 8l9 1M5 11l9 1M5 14h9" stroke="#333" strokeWidth="1.3" />
            <path d="M10 1h6v6z" fill="#e04850" />
            <path d="M3 11l6 6H3z" fill="#40b850" />
          </svg>
        </button>
        <button aria-label="Carnet">
          <svg width="18" height="18" viewBox="0 0 18 18">
            <path d="M2 1.500h7v3H2zM1 7.500h8v3H1zM3 12.500h6v3H3zM4 4.500h5v3H4z" fill="#58d860" stroke="#187820" />
            <path d="M9 1.500h5v3H9zM9 4.500h7v3H9zM9 7.500h5v3H9zM9 10.500h7v3H9z" fill="#f07078" stroke="#902028" />
          </svg>
        </button>
        <button aria-label="Fenêtres">
          <svg width="20" height="18" viewBox="0 0 20 18">
            <rect x="1.5" y="1.5" width="11" height="10" fill="#fff" stroke="#2858a8" />
            <path d="M1 1h12v3H1z" fill="#2858a8" />
            <rect x="6.5" y="6.5" width="12" height="11" fill="#fff" stroke="#2858a8" />
            <path d="M6 6h13v3H6z" fill="#2858a8" />
            <path d="M8 15l3-4 3 3 3-3" fill="none" stroke="#38a848" />
          </svg>
        </button>
        <button aria-label="Trading">
          <svg width="18" height="18" viewBox="0 0 18 18">
            <rect x="1.5" y="8.5" width="5" height="7" fill="#e05058" stroke="#902028" />
            <rect x="12.5" y="2.5" width="4" height="12" fill="#50d050" stroke="#187820" />
            <path d="M3 15l5-4.500C7.500 8 9 6 11.500 6L10.500 8l1.500 1.500L14 8.500c0 2.500-2 4-4 3.500L5.500 17c-1.500 1-3-.5-2.500-2z" fill="#fff" stroke="#222" />
          </svg>
        </button>
        <button aria-label="Replier">
          <svg width="10" height="10" viewBox="0 0 10 10" fill="none" stroke="#445">
            <path d="M4.500 1L1 5l3.500 4M9 1L5.500 5 9 9" />
          </svg>
        </button>
      </div>
      <div className="my-1 ml-1 flex flex-1 border border-[#9fb3be] bg-[#c5d6df]">
        <button aria-label="Défiler à gauche" className="flex w-[14px] items-center justify-center border-r border-[#9fb3be] bg-[#f0f4f6]">
          <svg width="4" height="6" viewBox="0 0 4 6"><path d="M4 0v6L0 3z" /></svg>
        </button>
      </div>
    </footer>
  );
}

function NewsPopup() {
  const [open, setOpen] = useState(true);
  if (!open) return null;
  return (
    <aside className="absolute right-0 bottom-0 h-24 w-[363px] border border-[#7f9aa8] bg-gradient-to-b from-[#e6f7fe] to-[#c6d9e2] px-2.5 text-[11px]">
      <div className="flex h-8 items-center">
        <span>16:29:07</span>
        <b className="ml-2.5">Actualités Zonebourse</b>
        <span className="flex-1" />
        <button aria-label="Réglages des actualités" className="-mt-1">
          <svg width="12" height="12" viewBox="0 0 12 12" fill="#8c9aa3">
            <path d="M1 9.500L5 6C4.500 3 6 1 8.500 1L7.500 3.500 9 5l2.500-1C11.500 6.500 9.500 8 7 7.500L3 11.500C1.500 12 .5 11 1 9.500z" />
          </svg>
        </button>
        <button aria-label="Fermer les actualités" onClick={() => setOpen(false)} className="-mt-1 ml-1.5 -mr-1">
          <svg width="11" height="11" viewBox="0 0 11 11">
            <path d="M1 1l9 9M10 1l-9 9" stroke="#7c8c96" strokeWidth="2" />
          </svg>
        </button>
      </div>
      <div className="flex gap-2.5">
        <svg width="72" height="52" viewBox="0 0 72 52" className="shrink-0">
          <rect width="72" height="52" fill="#000" />
          <path d="M20 10h33l-12 14c-3-7-10-12-21-14z" fill="#28883c" />
          <path d="M31 17c3 8 10 13 22 15H19z" fill="#d82028" />
          <text x="36" y="43" textAnchor="middle" fill="#e8e8e8" fontSize="10" fontFamily="DejaVu Sans, sans-serif">zonebourse</text>
        </svg>
        <div className="flex-1">
          <div className="flex h-[21px] items-center gap-1">
            <b>EXXON MOBIL</b>
            <svg width="16" height="12" viewBox="0 0 16 12">
              <rect x="4.5" y="1.5" width="11" height="10" fill="#fff" stroke="#2858a8" />
              <path d="M4 1h12v2.500H4z" fill="#2858a8" />
              <path d="M6 9l3-3 2 3 3-3" fill="none" stroke="#38a848" />
              <path d="M2.500 0h3v2.500H8v3H5.500V8h-3V5.500H0v-3h2.500z" fill="#fff" stroke="#2858a8" strokeWidth=".8" />
            </svg>
          </div>
          <a href="#news" className="block text-[#4c54d8] underline leading-[15px]">
            Wall Street en légère hausse, pas de souffle avant<br />un long week-end férié
          </a>
        </div>
      </div>
    </aside>
  );
}

export default function App() {
  return (
    <div
      className="relative min-h-screen overflow-hidden border-x border-[#5f8090] bg-white text-[#111]"
      style={{ fontFamily: '"Liberation Sans", Arial, sans-serif' }}
    >
      <TitleBar />
      <div className="flex">
        <Toolbar />
        <main className="min-w-0 flex-1">
          <AccountBar />
          <OrderEntry />
          <div className="flex">
            <div className="min-w-0 flex-1">
              <IndicatorTabs />
              <section className="relative h-[667px]">
                <PriceChart />
                <OrderOverlay />
              </section>
              <section className="relative h-[137px]">
                <RsiChart />
                <button className="absolute top-0 left-0 flex h-[17px] w-[59px] items-center gap-1 bg-[#e3eef4] pl-[3px] text-[11px] whitespace-nowrap">
                  <span className="h-2.5 w-2.5 bg-[#c0c0c0]" />
                  RSI (14)
                </button>
              </section>
              <TimeAxis />
            </div>
            <PriceAxis />
          </div>
        </main>
      </div>
      <BottomBar />
      <NewsPopup />
    </div>
  );
}
